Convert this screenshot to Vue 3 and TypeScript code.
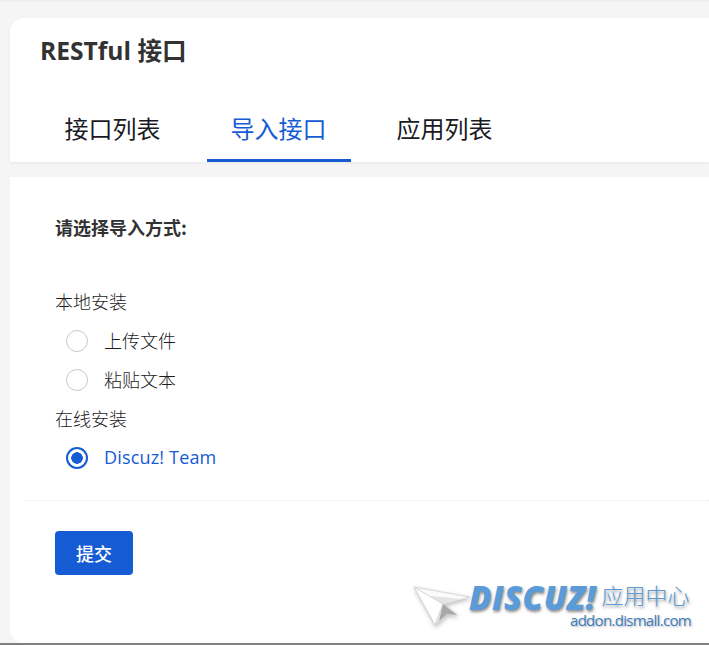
<script setup lang="ts">
const tabs: string[] = ['接口列表', '导入接口', '应用列表']
const active = 1
interface Group { title: string; options: { label: string; checked: boolean }[] }
const groups: Group[] = [
  { title: '本地安装', options: [{ label: '上传文件', checked: false }, { label: '粘贴文本', checked: false }] },
  { title: '在线安装', options: [{ label: 'Discuz! Team', checked: true }] },
]
</script>

<template>
  <div class="page">
    <header class="head">
      <h1 class="title">RESTful 接口</h1>
      <nav class="tabs">
        <span v-for="(t, i) in tabs" :key="t" class="tab" :class="{ on: i === active }">{{ t }}</span>
      </nav>
    </header>
    <main class="body">
      <div class="form">
        <div class="prompt">请选择导入方式:</div>
        <div v-for="g in groups" :key="g.title" class="group">
          <div class="group-title">{{ g.title }}</div>
          <label v-for="o in g.options" :key="o.label" class="opt" :class="{ checked: o.checked }">
            <span class="radio"></span>
            <span>{{ o.label }}</span>
          </label>
        </div>
      </div>
      <div class="divider"></div>
      <div class="actions">
        <button class="submit" type="button">提交</button>
      </div>
      <div class="mark">
        <svg class="plane" width="58" height="42" viewBox="0 0 58 42">
          <path d="M1 3 L57 13 L30 20 L44 31 L34 30 L22 41 Z" fill="#fbfbfb" stroke="#d8d8d8" stroke-width="1" />
          <path d="M18 12 L48 15 L28 21 L33 30 L22 41 L20 24 Z" fill="#e4e4e4" />
          <path d="M1 3 L30 20 L22 41 Z" fill="#ffffff" stroke="#d4d4d4" stroke-width="1" />
          <path d="M30 20 L44 31 L34 30 L26 37 Z" fill="#a8a8a8" />
        </svg>
        <div class="mark-text">
          <div class="mark-top">
            <span class="brand">DISCUZ</span><span class="bang">!</span><span class="cn">应用中心</span>
          </div>
          <div class="url">addon.dismall.com</div>
        </div>
      </div>
    </main>
  </div>
</template>

<style>
body { margin: 0; background: #f5f5f5; }
</style>

<style scoped>
.page {
  width: 709px;
  height: 645px;
  box-sizing: border-box;
  overflow: hidden;
  padding: 16px 0 0 10px;
  background: #f5f5f5;
  border-top: 2px solid #ededed;
  border-bottom: 2px solid #808080;
  font-family: "Noto Sans CJK SC", "Open Sans", sans-serif;
  color: #323233;
  display: flex;
  flex-direction: column;
  gap: 15px;
}
.head {
  background: #fff;
  height: 144px;
  box-sizing: border-box;
  border-top-left-radius: 14px;
  padding: 15px 0 0 30px;
  box-shadow: 0 1px 3px rgba(0, 0, 0, 0.06);
  flex: none;
}
.title {
  margin: 0;
  font-size: 24.6px;
  line-height: 36px;
  font-weight: 700;
  font-family: "Open Sans", "Noto Sans CJK SC", sans-serif;
  color: #323233;
}
.tabs {
  display: flex;
  gap: 22px;
  margin: 25px 0 0 1px;
}
.tab {
  width: 144px;
  height: 68px;
  box-sizing: border-box;
  display: flex;
  align-items: center;
  justify-content: center;
  padding: 2px 1px 0 0;
  font-size: 24px;
  color: #1a1a24;
  border-bottom: 3px solid transparent;
}
.tab.on {
  color: #155bd4;
  border-bottom-color: #155bd4;
}
.body {
  position: relative;
  flex: 1;
  background: #fff;
  border-bottom-left-radius: 14px;
  padding-left: 15px;
}
.form {
  padding: 34px 0 0 30px;
  font-size: 18px;
  line-height: 39px;
  font-weight: 300;
  color: #1c1c1e;
}
.prompt {
  font-weight: 700;
  line-height: 32px;
  margin-bottom: 39px;
  color: #323233;
}
.group-title { line-height: 39px; }
.opt {
  display: flex;
  align-items: center;
  gap: 16px;
  padding-left: 11px;
}
.radio {
  width: 22px;
  height: 22px;
  box-sizing: border-box;
  border: 1px solid #c8c9cc;
  border-radius: 50%;
  background: #fff;
}
.opt.checked {
  color: #155bd4;
  font-family: "Open Sans", "Noto Sans CJK SC", sans-serif;
  font-weight: 400;
  letter-spacing: 0.17px;
}
.opt.checked .radio {
  border: 2px solid #155bd4;
  background: radial-gradient(circle, #155bd4 0 5.5px, #fff 6px);
}
.divider {
  margin-top: 23px;
  border-top: 1px dotted #e8e8e8;
}
.actions { padding: 30px 0 0 30px; }
.submit {
  display: block;
  width: 78px;
  height: 44px;
  border: 0;
  border-radius: 4px;
  background: #155bd4;
  color: #fff;
  font: 500 18px "Noto Sans CJK SC", sans-serif;
  padding: 0;
}
.mark {
  position: absolute;
  left: 403px;
  bottom: 14px;
  display: flex;
  align-items: flex-start;
}
.plane { filter: drop-shadow(1px 2px 2px rgba(0, 0, 0, 0.25)); }
.mark-text { margin-left: -2px; font-family: "Open Sans", sans-serif; }
.mark-top {
  display: flex;
  align-items: center;
  height: 30px;
  margin-top: -1px;
  color: #5b9bd8;
  text-shadow: 1px 2px 3px rgba(0, 0, 0, 0.45);
}
.brand {
  font-size: 33px;
  font-weight: 800;
  font-style: italic;
  letter-spacing: 0.4px;
  line-height: 24px;
}
.bang {
  font-size: 33px;
  font-weight: 800;
  font-style: italic;
  line-height: 24px;
}
.cn {
  font-family: "Noto Sans CJK SC", sans-serif;
  font-size: 22px;
  line-height: 24px;
  font-weight: 300;
  margin: 0 0 8px 6px;
  color: #5c9bd6;
}
.url {
  margin: -2px 0 0 101px;
  font-size: 15px;
  line-height: 18px;
  letter-spacing: -0.7px;
  color: #3f7fbf;
  text-shadow: 1px 1px 2px rgba(0, 0, 0, 0.3);
  white-space: nowrap;
}
</style>
